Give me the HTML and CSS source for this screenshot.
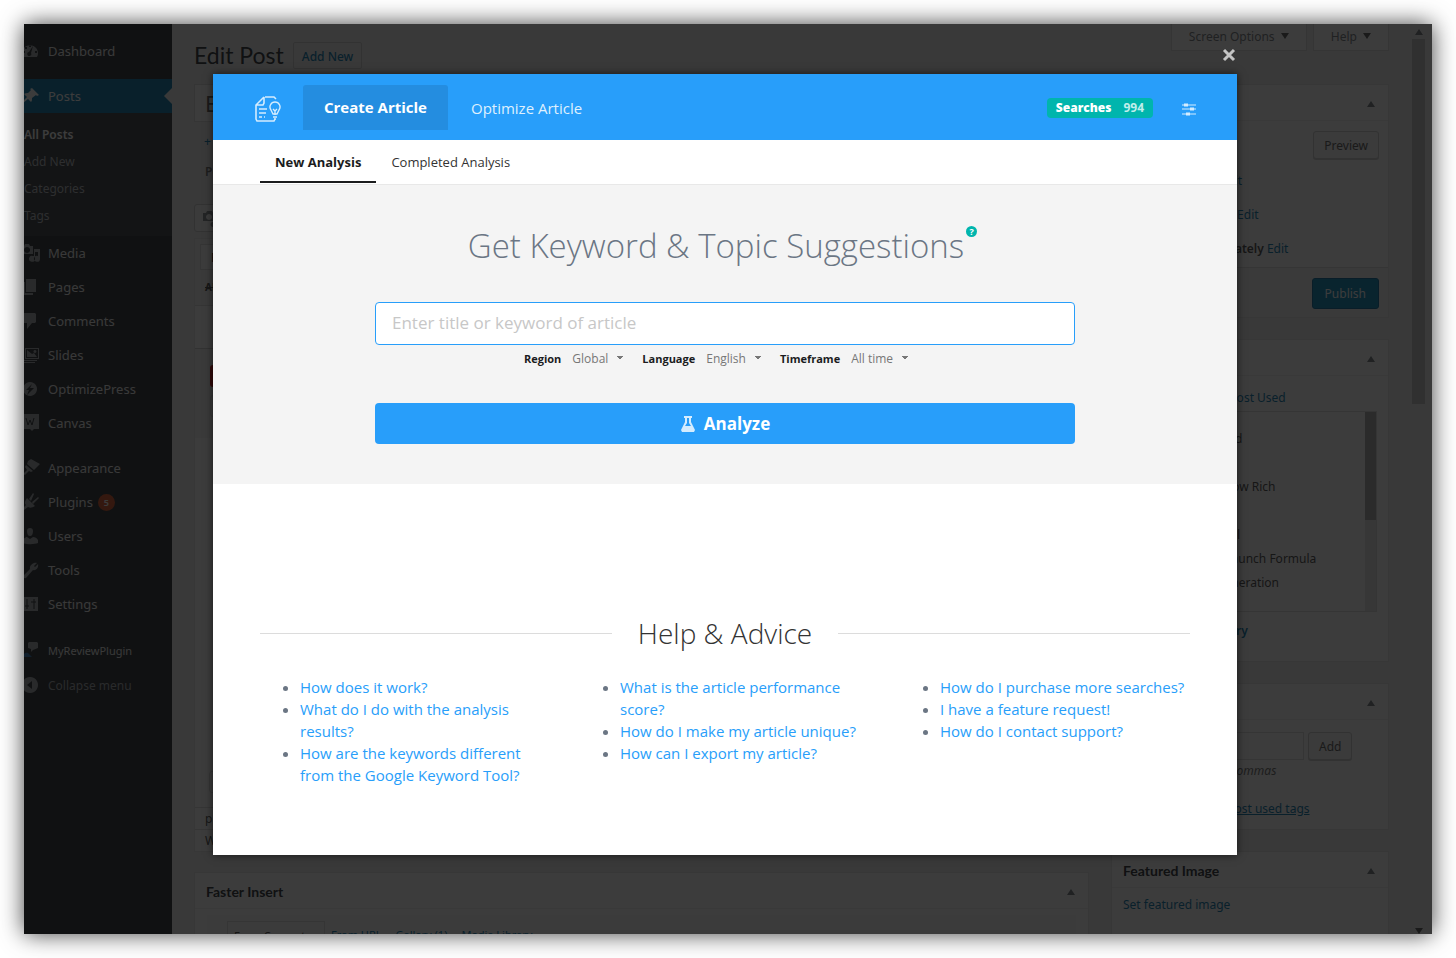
FILE: index.html
```html
<!DOCTYPE html>
<html lang="en">
<head>
    <meta charset="UTF-8">
    <meta name="viewport" content="width=device-width, initial-scale=1.0">
    <title>Edit Post</title>
    <link rel="stylesheet" href="styles.css">
</head>
<body>
<div class="screen">
    <div class="admin">
        <nav class="sidebar">
            <ul class="menu">
                <li><a href="#"><svg viewBox="4 0 16 20"><path fill-rule="evenodd" d="M3 16a8 8 0 1 1 14 0zM9 4h2v2H9zM5 6h2v2H5zM3 10h2v2H3zM15 10h2v2h-2zM13 5l-4 6a2 2 0 1 0 2 1z"/></svg>Dashboard</a></li>
                <li class="gap"><a href="#" class="current"><svg viewBox="4 0 16 20"><path d="M12 2l7 7-2 1-1-1-4 3c0 2 0 3-1 4l-3-3-5 4-1-1 5-5-3-3c1-1 3-1 4-1l3-3-1-1z"/></svg>Posts</a>
                    <ul class="submenu">
                        <li><a href="#" class="on">All Posts</a></li>
                        <li><a href="#">Add New</a></li>
                        <li><a href="#">Categories</a></li>
                        <li><a href="#">Tags</a></li>
                    </ul>
                </li>
                <li><a href="#"><svg viewBox="4 0 16 20"><path fill-rule="evenodd" d="M1 3h3l1-2h4l1 2h3v8H1zM7 4a3 3 0 1 0 .1 0zM14 6h6v10a3 3 0 1 1-2-3v-4h-3v7a3 3 0 1 1-2-3h1z"/></svg>Media</a></li>
                <li><a href="#"><svg viewBox="4 0 16 20"><path d="M6 2h10v13H6zM3 5h2v11h8v2H3z"/></svg>Pages</a></li>
                <li><a href="#"><svg viewBox="4 0 16 20"><path d="M4 2h11l1 1v8l-1 1h-3l-5 6v-6H3V3z"/></svg>Comments</a></li>
                <li><a href="#"><svg viewBox="4 0 16 20"><path fill-rule="evenodd" d="M5 3h14v11H5zM6 4v9h12V4zM7 5l5 4 2-1 3 4H7zM15 5a1.500 1.500 0 1 1-.1 0zM3 6h1v9h13v1H3zM1 8h1v9h13v1H1z"/></svg>Slides</a></li>
                <li><a href="#"><svg viewBox="4 0 16 20"><path fill-rule="evenodd" d="M10 3a7 7 0 1 0 .1 0zM12 5L6 11h3l-2 5 7-7h-4z"/></svg>OptimizePress</a></li>
                <li><a href="#"><svg viewBox="4 0 16 20"><path d="M3 1h16v15h-5l-2 2-2-2H3z"/><path class="cut" d="M6 5l2 7 2-5 2 5 2-7"/></svg>Canvas</a></li>
                <li class="gap"><a href="#"><svg viewBox="4 0 16 20"><path d="M8 3l3-2 9 5-6 6-7-6zM6 7l7 6-2 1-2-1-4 4-2-1 4-4-2-3z"/></svg>Appearance</a></li>
                <li><a href="#"><svg viewBox="4 0 16 20"><path d="M7 6l8 8c-3 2-5 2-7 1l-4 3-1-2 3-3c-2-2-1-4 1-7zM9 7l4-6 1 1-3 7zM12 10l6-5 1 1-6 6z"/></svg>Plugins<span class="count">5</span></a></li>
                <li><a href="#"><svg viewBox="4 0 16 20"><path d="M10 2c2 0 3 1 3 3 0 3-1 5-3 5S7 8 7 5c0-2 1-3 3-3zM3 17v-3c1-2 3-3 4-3l3 2 3-2c2 0 4 1 5 3v3c-3 1.500-12 1.500-15 0z"/></svg>Users</a></li>
                <li><a href="#"><svg viewBox="4 0 16 20"><path d="M17 3l-3 3 1 1 3-3c1 4-2 7-5 6l-7 8c-2 1-4-1-3-2l7-7c-1-3 3-7 7-6z"/></svg>Tools</a></li>
                <li><a href="#"><svg viewBox="4 0 16 20"><path d="M2 3h16v14H2z"/><path class="cut" d="M7 5v10M5 12h4M14 5v10M11 8h5"/></svg>Settings</a></li>
                <li class="extra"><a href="#"><svg viewBox="4 0 16 20"><path d="M9 2h8l1 1v5l-5 2-2 2v-3L8 8V3z"/><path class="tie" d="M3 16c1-3 3-4 5-3l4 4H3z"/></svg>MyReviewPlugin</a></li>
                <li class="collapse"><a href="#"><svg viewBox="4 0 16 20"><path fill-rule="evenodd" d="M10 2a8 8 0 1 0 .1 0zM12 6v8l-5-4z"/></svg>Collapse menu</a></li>
            </ul>
        </nav>
        <main class="wrap">
            <div class="page-head">
                <h1>Edit Post</h1>
                <a href="#" class="add-new">Add New</a>
                <div class="screen-links">
                    <button type="button">Screen Options <i class="tri down"></i></button>
                    <button type="button">Help <i class="tri down"></i></button>
                </div>
            </div>
            <div class="columns">
                <div class="editor">
                    <input class="post-title" type="text" value="E" aria-label="Title">
                    <a href="#" class="plus">+</a>
                    <strong class="permalink">Permalink:</strong>
                    <button type="button" class="media" aria-label="Add Media"><svg viewBox="0 0 18 18"><path fill-rule="evenodd" d="M0 4h3l1-2h5l1 2h3v8H0zM6 5a3 3 0 1 0 .1 0zM10 13a2.500 2.500 0 1 0 .1 0z"/></svg></button>
                    <div class="post-body">
                        <div class="tools">
                            <button type="button" class="format">Paragraph</button>
                            <s>ABC</s>
                        </div>
                        <div class="tools-row"></div>
                        <div class="promo"><span class="red"></span><span class="box"></span></div>
                        <div class="text-area"><span class="box"></span></div>
                        <div class="status-row">p</div>
                        <div class="status-row">Word count</div>
                    </div>
                    <section class="postbox faster">
                        <h2>Faster Insert <i class="tri"></i></h2>
                        <div class="insert">
                            <a href="#" class="active">From Computer</a>
                            <a href="#">From URL</a>
                            <a href="#">Gallery (1)</a>
                            <a href="#">Media Library</a>
                        </div>
                    </section>
                </div>
                <aside class="boxes">
                    <section class="postbox" aria-label="Publish">
                        <h2><i class="tri"></i></h2>
                        <div class="publish">
                            <button type="button" class="btn">Preview</button>
                            <p>Status: <b>Draft</b> <a href="#">Edit</a></p>
                            <p>Visibility: <b>Public</b> <a href="#">Edit</a></p>
                            <p>Publish <b>immediately</b> <a href="#">Edit</a></p>
                        </div>
                        <div class="publish-foot"><button type="button" class="btn primary">Publish</button></div>
                    </section>
                    <section class="postbox" aria-label="Categories">
                        <h2><i class="tri"></i></h2>
                        <div class="cats">
                            <p class="cat-tabs">All Categories <a href="#">Most Used</a></p>
                            <ul class="cat-list">
                                <li>Uncategorized</li>
                                <li>Books</li>
                                <li>Think and Grow Rich</li>
                                <li>Events</li>
                                <li>Internet Email</li>
                                <li class="child">Product Launch Formula</li>
                                <li class="child">Traffic Generation</li>
                            </ul>
                            <a href="#" class="add-cat">+ Add New Category</a>
                        </div>
                    </section>
                    <section class="postbox" aria-label="Tags">
                        <h2><i class="tri"></i></h2>
                        <div class="tags">
                            <div class="tag-form"><input type="text" aria-label="Add tag"><button type="button" class="btn">Add</button></div>
                            <em>Separate tags with commas</em>
                            <a href="#">Choose from the most used tags</a>
                        </div>
                    </section>
                    <section class="postbox">
                        <h2>Featured Image <i class="tri"></i></h2>
                        <div class="featured"><a href="#">Set featured image</a></div>
                    </section>
                </aside>
            </div>
        </main>
        <div class="scroll"><i class="tri"></i><span class="thumb"></span><i class="tri down"></i></div>
    </div>

    <div class="overlay">
        <div class="modal" role="dialog" aria-label="Create Article">
            <button type="button" class="close" aria-label="Close"><svg viewBox="0 0 14 14"><path d="M2 2l10 10M12 2L2 12"/></svg></button>
            <header class="top">
                <svg class="logo" viewBox="0 0 26 26"><path stroke-width="1.600" d="M10 1h9l2 2M9 1L1 9v14l1 2h17l1-2M9 1v6l-1 2H1M4 13h8M4 17h7M4 21h3M9 21h1"/><path stroke-width="1.400" d="M20 6a5 5 0 0 1 4 8l-2 4h-4l-2-4a5 5 0 0 1 4-8zM18 13l2 2 2-2M20 15v4M18 21h4M19 23h2"/></svg>
                <a href="#" class="tab active">Create Article</a>
                <a href="#" class="tab">Optimize Article</a>
                <div class="searches"><b>Searches</b><span>994</span></div>
                <button type="button" class="options" aria-label="Settings"><svg viewBox="0 0 14 14"><path d="M0 3h14M0 7h14M0 12h14"/><path class="knob" d="M2 3h4M8 7h4M4 12h4"/></svg></button>
            </header>
            <nav class="subnav">
                <a href="#" class="active">New Analysis</a>
                <a href="#">Completed Analysis</a>
            </nav>
            <form class="search">
                <h2>Get Keyword &amp; Topic Suggestions<span class="help">?</span></h2>
                <input type="text" class="keyword" placeholder="Enter title or keyword of article" aria-label="Keyword">
                <div class="filters">
                    <label for="region">Region</label>
                    <select id="region"><option>Global</option></select>
                    <label for="language">Language</label>
                    <select id="language"><option>English</option></select>
                    <label for="timeframe">Timeframe</label>
                    <select id="timeframe"><option>All time</option></select>
                </div>
                <button type="button" class="analyze"><svg viewBox="0 0 16 16"><path fill-rule="evenodd" d="M4 0h8v2h-1v4l4 8-1 2H2l-1-2 4-8V2H4zM7 2v5l-2 3h6L9 7V2z"/></svg>Analyze</button>
            </form>
            <section class="advice">
                <h3>Help &amp; Advice</h3>
                <div class="links">
                    <ul>
                        <li><a href="#">How does it work?</a></li>
                        <li><a href="#">What do I do with the analysis results?</a></li>
                        <li><a href="#">How are the keywords different from the Google Keyword Tool?</a></li>
                    </ul>
                    <ul>
                        <li><a href="#">What is the article performance score?</a></li>
                        <li><a href="#">How do I make my article unique?</a></li>
                        <li><a href="#">How can I export my article?</a></li>
                    </ul>
                    <ul>
                        <li><a href="#">How do I purchase more searches?</a></li>
                        <li><a href="#">I have a feature request!</a></li>
                        <li><a href="#">How do I contact support?</a></li>
                    </ul>
                </div>
            </section>
        </div>
    </div>
</div>
</body>
</html>
```
FILE: styles.css
```css
* { box-sizing: border-box; }
body { margin: 0; padding: 24px; background: #fff; font-family: "Open Sans", "Noto Sans", sans-serif; }
ul { list-style: none; margin: 0; padding: 0; }
h1, h2, h3, p { margin: 0; }
a { text-decoration: none; }
button, input, select { font-family: inherit; }

.screen { position: relative; height: calc(100vh - 48px); overflow: hidden; }
body::before { content: ""; position: absolute; inset: 24px; box-shadow: 0 0 22px rgba(0, 0, 0, 0.75); }

/* admin page */
.admin { display: flex; height: 100%; background: #f1f1f1; font-family: "Noto Sans", "Open Sans", sans-serif; font-size: 12px; color: #444; }
.admin a { color: #0073aa; }
.sidebar { flex: 0 0 148px; padding-top: 10px; background: #23282d; }
.admin .menu > li > a { display: flex; align-items: center; gap: 8px; height: 34px; font-size: 13px; color: #eee; }
.menu svg { width: 16px; height: 20px; fill: #a0a5aa; }
.menu .cut { fill: none; stroke: #23282d; stroke-width: 1; }
.menu .tie { fill: #2a6fb0; }
.menu .gap { margin-top: 11px; }
.menu .extra { margin-top: 12px; }
.admin .menu .extra > a { font-size: 11px; }
.menu .collapse { margin-top: 1px; }
.admin .menu .collapse > a { font-size: 12px; color: #a0a5aa; }
.admin .menu > li > a.current { background: #0073aa; color: #fff; position: relative; }
.current svg { fill: #fff; }
.current::after { content: ""; position: absolute; right: 0; border: 8px solid transparent; border-left: 0; border-right-color: #f1f1f1; }
.submenu { padding: 8px 0 7px; background: #32373c; }
.admin .submenu a { display: block; font-size: 12px; line-height: 27px; color: #b4b9be; }
.admin .submenu .on { font-weight: 600; color: #fff; }
.count { width: 17px; height: 17px; margin-left: -3px; border-radius: 50%; background: #d54e21; color: #fff; font-size: 9px; font-weight: 600; line-height: 17px; text-align: center; }

.wrap { flex: 1; min-width: 0; padding: 0 16px 0 22px; }
.page-head { display: flex; gap: 9px; height: 60px; }
.page-head h1 { padding-top: 14px; font-family: Lato, sans-serif; font-size: 23px; font-weight: 400; line-height: 34px; color: #23282d; }
.add-new { height: 27px; margin-top: 18px; padding: 0 8px; border: 1px solid #ccc; border-radius: 2px; font-weight: 500; line-height: 27px; }
.screen-links { display: flex; gap: 6px; margin-left: auto; }
.screen-links button { height: 27px; padding: 0 17px 2px; border: 1px solid #ddd; border-top: 0; background: #fff; color: #72777c; font-size: 12px; line-height: 23px; }
.tri { display: inline-block; border: 4px solid transparent; border-top: 0; border-bottom: 6px solid #72777c; }
.tri.down { border-top: 6px solid #555; border-bottom: 0; margin: 0 0 2px 3px; }

.columns { display: flex; gap: 22px; }
.editor { flex: 1; min-width: 0; display: flex; flex-direction: column; align-items: flex-start; }
.post-title { width: 100%; height: 38px; padding: 0 10px; border: 1px solid #ddd; font-size: 22px; color: #555; }
.plus { margin: 11px 0 0 10px; line-height: 18px; }
.permalink { margin: 12px 0 0 11px; line-height: 18px; color: #666; font-weight: 600; }
.media { width: 110px; height: 28px; margin-top: 23px; padding: 4px 8px; border: 1px solid #ccc; border-radius: 3px; background: #f7f7f7; text-align: left; }
.media svg { width: 18px; height: 18px; fill: #82878c; }
.post-body { width: 100%; margin-top: 6px; border: 1px solid #e5e5e5; background: #fff; }
.tools { height: 67px; padding: 5px; background: #f5f5f5; border-bottom: 1px solid #ddd; }
.format { display: block; width: 130px; height: 26px; padding: 0 10px; border: 1px solid #ddd; background: #fff; text-align: left; font-size: 12px; }
.tools s { display: block; padding: 8px 5px; font-size: 10px; font-weight: 700; line-height: 18px; }
.tools-row { height: 43px; border-bottom: 1px solid #ccc; }
.promo { display: grid; align-content: start; gap: 8px; height: 89px; padding: 16px 15px; background: #f5f5f5; }
.red { width: 100px; height: 22px; border-radius: 3px; background: #c00; }
.box { width: 100px; height: 22px; border: 1px solid #ddd; border-radius: 3px; }
.text-area { display: flex; align-items: flex-end; height: 369px; padding: 14px; }
.status-row { height: 22px; padding: 0 10px; border-top: 1px solid #ddd; line-height: 22px; font-size: 12px; }

.postbox { width: 100%; border: 1px solid #e5e5e5; background: #fff; }
.postbox h2 { display: flex; align-items: center; height: 36px; padding: 1px 13px 0 11px; border-bottom: 1px solid #eee; font-family: Lato, sans-serif; font-size: 14px; font-weight: 700; color: #23282d; }
.postbox h2 .tri { margin: 1px 0 0 auto; }
.faster { margin-top: 20px; }
.insert { display: flex; gap: 14px; height: 60px; margin: 6px 12px 0; padding: 6px 20px; background: #f9f9f9; font-size: 11px; line-height: 28px; white-space: nowrap; }
.admin .insert .active { margin-right: -8px; padding: 0 8px 0 6px; border: 1px solid #ddd; color: #444; }
.boxes { flex: 0 0 278px; display: flex; flex-direction: column; gap: 21px; }
.btn { height: 28px; padding: 0 10px; border: 1px solid #ccc; border-radius: 3px; background: #f7f7f7; box-shadow: 0 1px 0 #ccc; color: #555; font-size: 12px; }
.publish { display: flex; flex-direction: column; padding: 10px 9px 1px 34px; }
.publish .btn { align-self: flex-end; margin-bottom: 5px; }
.publish p { line-height: 34px; }
.publish b { font-weight: 600; }
.publish-foot { display: flex; justify-content: flex-end; padding: 10px 9px 8px; border-top: 1px solid #ddd; background: #f5f5f5; }
.btn.primary { height: 31px; padding: 0 12px; border-color: #006799; background: #0085ba; box-shadow: none; color: #fff; }
.cats { height: 285px; padding: 12px 11px; }
.cat-tabs { line-height: 20px; }
.cat-tabs a { margin-left: 22px; }
.cat-list { height: 201px; margin: 3px 0 10px; padding: 15px 36px; border: 1px solid #ddd; background: linear-gradient(#aaa, #aaa) right top / 11px 108px no-repeat, linear-gradient(#e6e6e6, #e6e6e6) right / 11px 100% no-repeat; }
.cat-list li { line-height: 24px; white-space: nowrap; }
.cat-list .child { padding-left: 18px; }
.add-cat { margin-left: 6px; font-weight: 600; }
.tags { display: flex; flex-direction: column; align-items: flex-start; height: 109px; padding: 12px; }
.tag-form { display: flex; gap: 4px; height: 28px; }
.tag-form input { width: 180px; border: 1px solid #ddd; }
.tags em { padding: 1px 0 0 5px; line-height: 20px; color: #666; }
.tags > a { padding-left: 2px; line-height: 20px; margin-top: 18px; text-decoration: underline; }
.featured { height: 80px; padding: 7px 11px; line-height: 20px; }
.scroll { display: flex; flex-direction: column; align-items: center; flex: 0 0 27px; padding-top: 5px; }
.thumb { width: 13px; height: 365px; margin-top: 4px; background: #c1c1c1; }
.scroll .down { margin: auto 0 0; }

/* popup */
.overlay { position: absolute; inset: 0; padding: 50px 6px 0 0; background: rgba(11, 11, 11, 0.8); }
.modal { position: relative; max-width: 1024px; min-height: 781px; margin: 0 auto; background: #fff; box-shadow: 0 0 8px rgba(0, 0, 0, 0.6); }
.close { position: absolute; top: -26px; right: 1px; width: 14px; height: 14px; padding: 0; border: 0; background: none; }
.close svg, .options svg { display: block; width: 14px; height: 14px; }
.close path { fill: none; stroke: #c4c4c4; stroke-width: 3; }
.top { display: flex; align-items: center; height: 66px; padding: 0 41px; background: #289efa; color: #fff; }
.logo { width: 26px; height: 26px; margin: 3px 22px 0 1px; fill: none; stroke: #d4ecfe; }
.tab { padding: 2px 23px 0; color: #dff0fe; font-size: 15px; line-height: 45px; }
.tab.active { padding: 0 21px; border-radius: 3px 3px 0 0; background: #248de0; color: #fff; font-weight: 700; }
.searches { display: flex; gap: 12px; margin: 2px 0 0 auto; padding: 0 9px; border-radius: 4px; background: #00b5ad; font-size: 12px; line-height: 20px; }
.searches b { font-weight: 800; }
.searches span { color: #c0eeeb; font-weight: 700; }
.options { margin: 4px 0 0 29px; padding: 0; border: 0; background: none; }
.options path { stroke: #d4ecfe; stroke-width: 1; }
.options .knob { stroke-width: 3; }
.subnav { display: flex; height: 45px; padding: 0 47px; border-bottom: 1px solid #e8e8e8; }
.subnav a { height: 43px; padding: 0 15px; color: #333; font-size: 13px; line-height: 44px; }
.subnav .active { border-bottom: 2px solid #1b1c1d; color: #1b1c1d; font-weight: 700; }
.search { display: flex; flex-direction: column; align-items: center; height: 299px; padding: 36px 162px 0; background: #f4f4f4; }
.search h2 { position: relative; color: #6b7684; font-size: 33px; font-weight: 300; line-height: 50px; margin-right: 18px; }
.help { position: absolute; top: 5px; right: -13px; width: 11px; height: 11px; border-radius: 50%; background: #00b5ad; color: #fff; font-size: 9px; font-weight: 700; line-height: 11px; text-align: center; }
.keyword { width: 100%; height: 43px; margin-top: 31px; padding: 0 16px 2px; border: 1px solid #289efa; border-radius: 4px; background: #fff; font-size: 17px; }
.keyword::placeholder { color: #c7c7c7; }
.filters { display: flex; align-items: center; height: 26px; margin-right: 18px; font-size: 11px; color: #1b1c1d; }
.filters label { font-weight: 700; }
.filters select { field-sizing: content; appearance: none; margin: 0 19px 0 7px; padding: 0 15px 0 4px; border: 0; font-size: 12px; color: #777; background: linear-gradient(to top right, transparent 50%, #777 50%) right 3px center / 3px 4px no-repeat, linear-gradient(to top left, transparent 50%, #777 50%) right center / 3px 4px no-repeat; }
.filters select:last-child { margin-right: 0; }
.analyze { display: flex; justify-content: center; align-items: center; gap: 8px; width: 100%; height: 41px; margin-top: 32px; border: 0; border-radius: 4px; background: #289efa; color: #fff; font-size: 17px; font-weight: 700; }
.analyze svg { width: 16px; height: 16px; fill: #d4ecfe; }
.advice { padding: 130px 47px 0; }
.advice h3 { display: flex; align-items: center; gap: 26px; color: #333; font-size: 28px; font-weight: 300; line-height: 38px; }
.advice h3::before, .advice h3::after { content: ""; flex: 1; height: 1px; background: #dcdcdc; }
.links { display: grid; grid-template-columns: repeat(3, 1fr); margin: 24px -30px 0 0; }
.links ul { padding: 0 30px 0 40px; list-style: disc; color: #6b7684; font-size: 15px; line-height: 22px; }
.links a { color: #289efa; }
```
